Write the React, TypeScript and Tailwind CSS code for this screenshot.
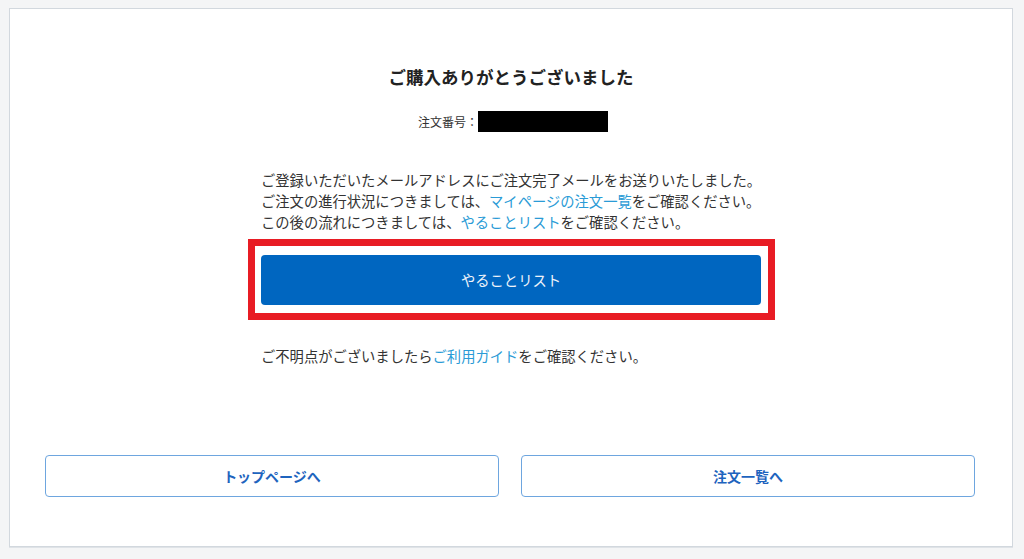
import React from 'react';

const font = { fontFamily: '"Noto Sans CJK JP", "Noto Sans", sans-serif' };

export default function App() {
  return (
    <div className="w-[1024px] h-[559px] bg-[#f4f5f6] pt-[8px] pl-[9px]" style={font}>
      {/* Card */}
      <div className="w-[1004px] h-[539px] bg-white border border-[#d2d8de] shadow-[0_1px_0_#dfe3e7] pt-[56px]">
        <h1 className="text-center text-[17.5px] leading-[24px] font-bold text-[#222]">
          ご購入ありがとうございました
        </h1>
        <div className="mt-[22px] flex items-center justify-center text-[12px] text-[#333] pl-[4px]">
          <span>注文番号：</span>
          <span className="inline-block w-[130px] h-[21px] bg-black" />
        </div>
        {/* Content column */}
        <div className="w-[500px] mx-auto mt-[37px]">
          <div className="text-[14.3px] leading-[21px] text-[#333] whitespace-nowrap">
            <p>ご登録いただいたメールアドレスにご注文完了メールをお送りいたしました。</p>
            <p>
              ご注文の進行状況につきましては、<a className="text-[#2a9bd6]">マイページの注文一覧</a>をご確認ください。
            </p>
            <p>
              この後の流れにつきましては、<a className="text-[#2a9bd6]">やることリスト</a>をご確認ください。
            </p>
          </div>
          <div className="mt-[7px] ml-[-13px] w-[527px] border-[7px] border-[#e81c24] pl-[6px] pr-[7px] pt-[9px] pb-[8px]">
            <button className="w-[500px] h-[50px] rounded-[4px] bg-[#0066c0] text-[14.3px] text-[#eef3fa]">
              やることリスト
            </button>
          </div>
          <p className="mt-[25px] text-[14.3px] leading-[21px] text-[#333] whitespace-nowrap">
            ご不明点がございましたら<a className="text-[#2a9bd6]">ご利用ガイド</a>をご確認ください。
          </p>
        </div>
        {/* Bottom buttons */}
        <div className="mt-[89px] pl-[35px] pr-[37px] grid grid-cols-2 gap-[22px]">
          <button className="h-[42px] rounded-[4px] border border-[#6ea6df] text-[14px] font-bold text-[#1e64be]">
            トップページへ
          </button>
          <button className="h-[42px] rounded-[4px] border border-[#6ea6df] text-[14px] font-bold text-[#1e64be]">
            注文一覧へ
          </button>
        </div>
      </div>
    </div>
  );
}
